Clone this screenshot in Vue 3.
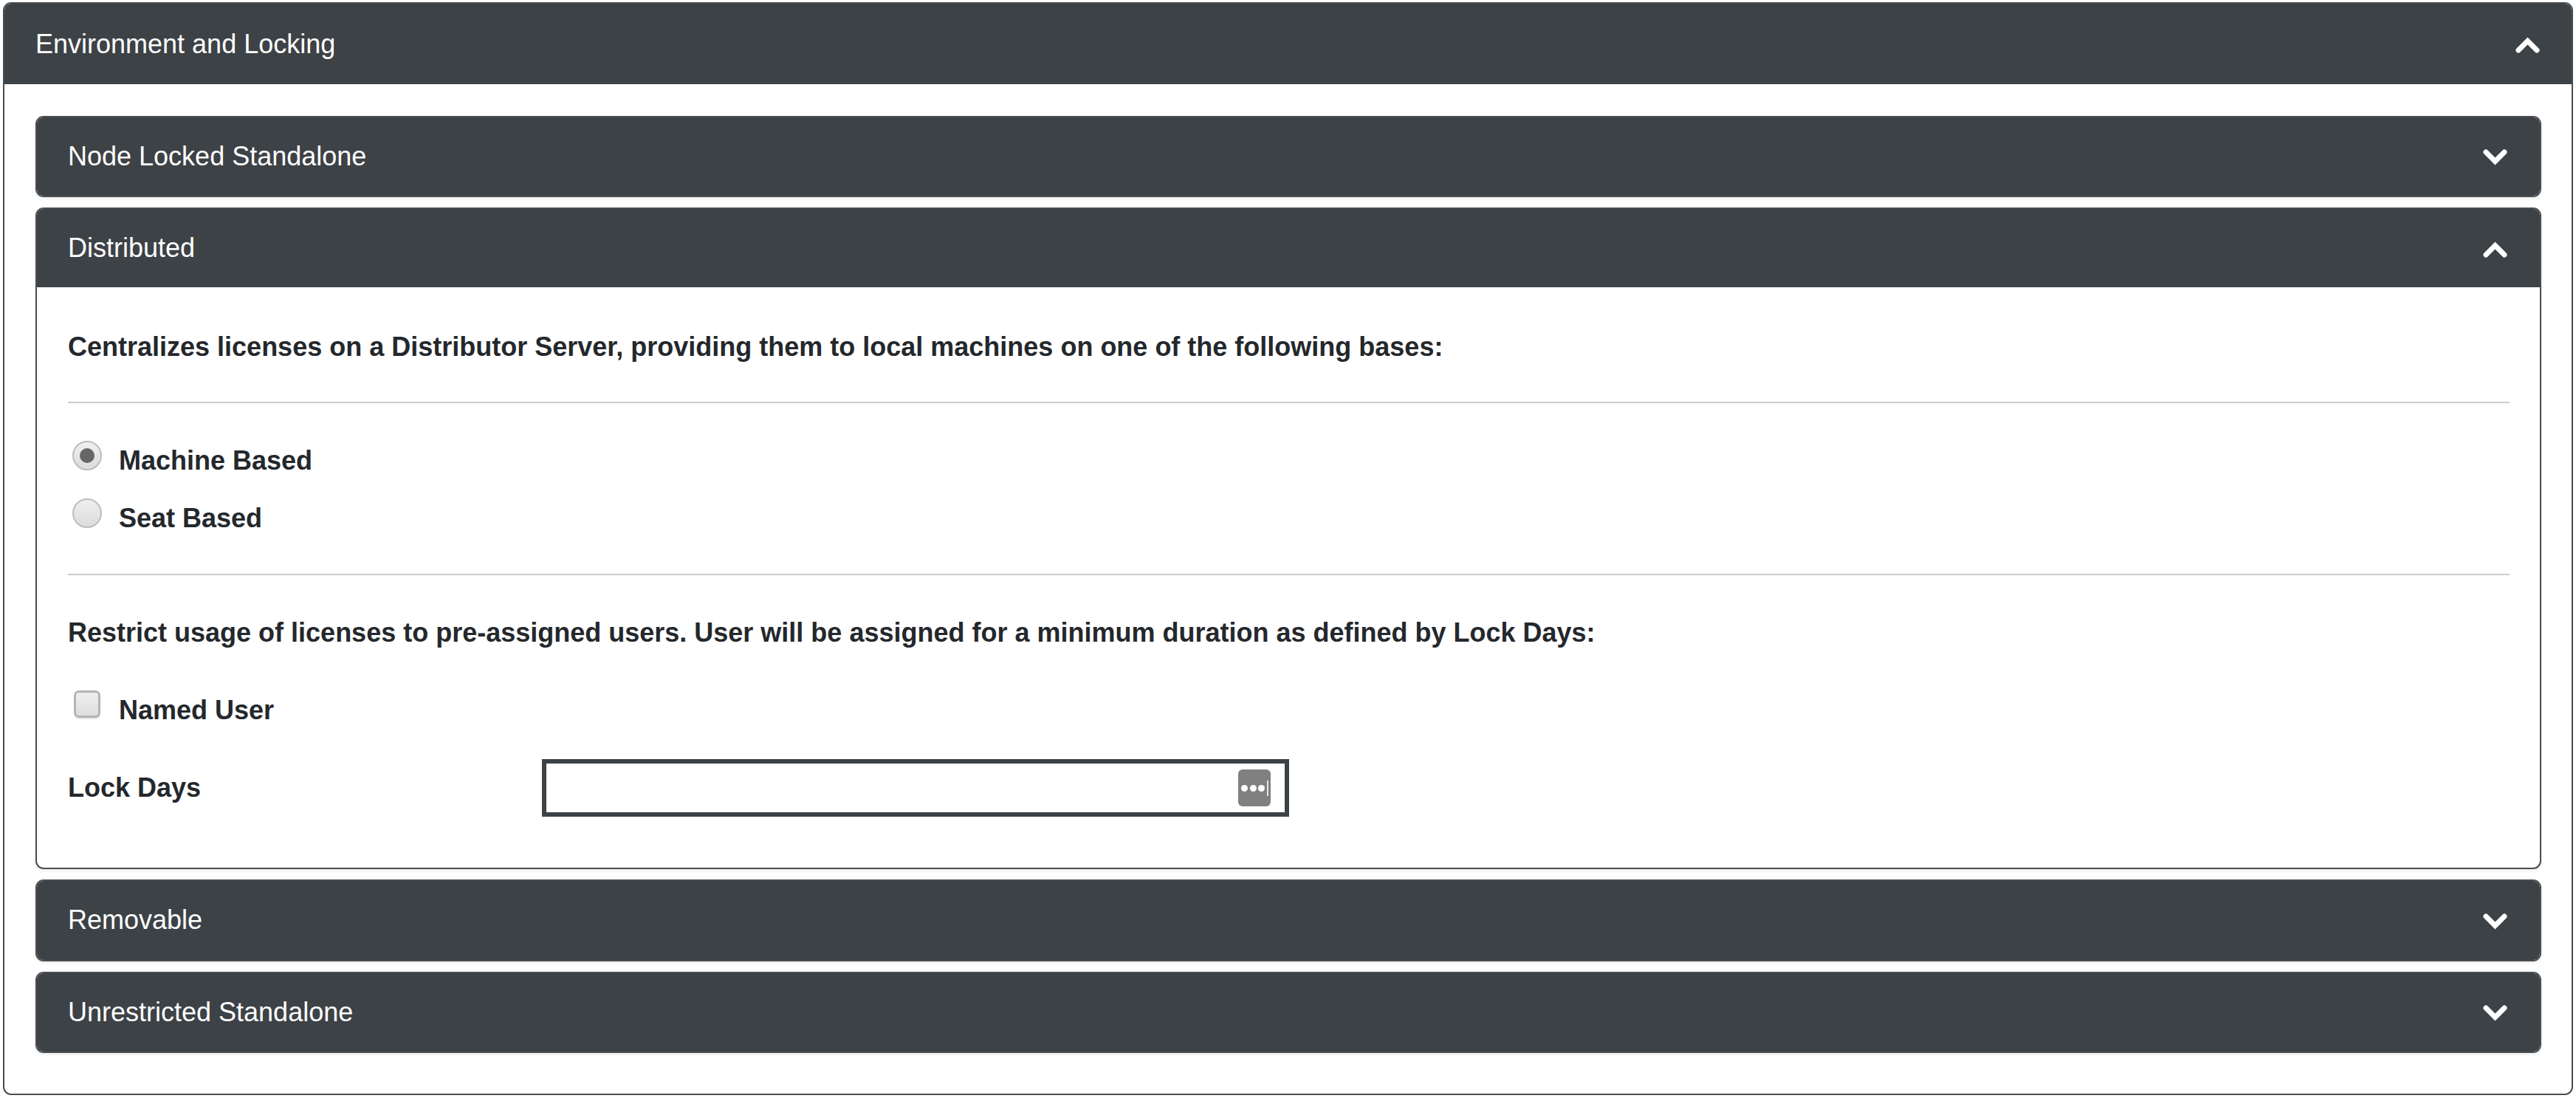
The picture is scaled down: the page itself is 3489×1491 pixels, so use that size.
<script setup>
import { ref } from 'vue'

const basis = ref('machine')
const namedUser = ref(false)
const lockDays = ref('')
</script>

<template>
  <div class="panel outer">
    <div class="panel-head outer-head">
      <span>Environment and Locking</span>
      <svg class="chev" viewBox="0 0 33 22"><path d="M4 18 L16.5 5.5 L29 18" /></svg>
    </div>
    <div class="outer-body">
      <div class="panel">
        <div class="panel-head">
          <span>Node Locked Standalone</span>
          <svg class="chev" viewBox="0 0 33 22"><path d="M4 4 L16.5 16.5 L29 4" /></svg>
        </div>
      </div>

      <div class="panel">
        <div class="panel-head open">
          <span>Distributed</span>
          <svg class="chev" viewBox="0 0 33 22"><path d="M4 18 L16.5 5.5 L29 18" /></svg>
        </div>
        <div class="panel-body">
          <p class="lead">Centralizes licenses on a Distributor Server, providing them to local machines on one of the following bases:</p>
          <hr class="rule-a" />
          <label class="opt first">
            <span class="radio" :class="{ on: basis === 'machine' }" @click="basis = 'machine'"></span>
            Machine Based
          </label>
          <label class="opt second">
            <span class="radio" :class="{ on: basis === 'seat' }" @click="basis = 'seat'"></span>
            Seat Based
          </label>
          <hr class="rule-b" />
          <p class="lead">Restrict usage of licenses to pre-assigned users. User will be assigned for a minimum duration as defined by Lock Days:</p>
          <label class="opt named">
            <span class="check" @click="namedUser = !namedUser"></span>
            Named User
          </label>
          <div class="lock-row">
            <span class="lock-label">Lock Days</span>
            <div class="lock-input">
              <input v-model="lockDays" type="text" />
              <span class="dots">
                <i></i><i></i><i></i>
                <b></b>
              </span>
            </div>
          </div>
        </div>
      </div>

      <div class="panel">
        <div class="panel-head">
          <span>Removable</span>
          <svg class="chev" viewBox="0 0 33 22"><path d="M4 4 L16.5 16.5 L29 4" /></svg>
        </div>
      </div>

      <div class="panel">
        <div class="panel-head">
          <span>Unrestricted Standalone</span>
          <svg class="chev" viewBox="0 0 33 22"><path d="M4 4 L16.5 16.5 L29 4" /></svg>
        </div>
      </div>
    </div>
  </div>
</template>

<style scoped>
.panel {
  border: 2px solid #4a4e52;
  border-radius: 11px;
  background: #fff;
  overflow: hidden;
  box-shadow: 0 2px 5px rgba(0, 0, 0, 0.08);
  font-family: "Liberation Sans", Arial, sans-serif;
  color: #24282c;
}

.outer {
  margin: 3px 4px 0;
  height: 1480px;
  box-sizing: border-box;
  box-shadow: none;
}

.panel-head {
  display: flex;
  align-items: center;
  justify-content: space-between;
  box-sizing: border-box;
  height: 106.5px;
  padding: 0 44px 0 42px;
  background: #3d4246;
  color: #fff;
  font-size: 36px;
}

.panel-head.open {
  height: 106px;
}

.outer-head {
  height: 109px;
  padding-left: 42px;
  padding-right: 43px;
}

.chev {
  width: 33px;
  height: 22px;
  flex: none;
  margin-top: 3px;
}

.chev path {
  fill: none;
  stroke: #fff;
  stroke-width: 7px;
  stroke-linejoin: miter;
  stroke-linecap: round;
}

.outer-body {
  display: flex;
  flex-direction: column;
  gap: 14px;
  padding: 42.5px 41px 0 42px;
}

.panel-body {
  padding: 54px 41px 69px 42px;
  font-size: 36px;
  font-weight: bold;
  line-height: 54px;
}

.lead {
  margin: 0;
}

hr {
  border: 0;
  border-top: 2px solid #cccccc;
}

.rule-a {
  margin: 47px 0 51px;
}

.rule-b {
  margin: 48px 0 51px;
}

.opt {
  display: flex;
  align-items: flex-start;
  height: 54px;
}

.opt.second {
  margin-top: 24px;
}

.opt.named {
  margin-top: 51px;
}

.radio {
  position: relative;
  box-sizing: border-box;
  flex: none;
  width: 40px;
  height: 40px;
  margin: 0 23px 0 6px;
  border: 2px solid #bdbdbd;
  border-radius: 50%;
  background: linear-gradient(#efefef, #dcdcdc);
}

.radio.on::after {
  content: "";
  position: absolute;
  left: 8px;
  top: 8px;
  width: 20px;
  height: 20px;
  border-radius: 50%;
  background: #666;
}

.check {
  box-sizing: border-box;
  flex: none;
  width: 36px;
  height: 37px;
  margin: 0 25px 0 8px;
  border: 3px solid #b4b4b4;
  border-radius: 7px;
  background: linear-gradient(#eeeeee, #dedede);
  box-shadow: 0 2px 0 #e6e6e6;
}

.lock-row {
  display: flex;
  align-items: center;
  margin-top: 39px;
  height: 78px;
}

.lock-label {
  width: 642px;
  flex: none;
}

.lock-input {
  display: flex;
  align-items: center;
  box-sizing: border-box;
  width: 1012px;
  height: 78px;
  padding-right: 19px;
  border: 6px solid #3d4246;
  background: #fff;
}

.lock-input input {
  flex: 1;
  min-width: 0;
  border: 0;
  outline: 0;
  font-size: 36px;
  background: transparent;
}

.dots {
  display: flex;
  align-items: center;
  gap: 2.5px;
  box-sizing: border-box;
  flex: none;
  width: 44px;
  height: 50px;
  padding-left: 4px;
  border-radius: 6px;
  background: #808080;
}

.dots i {
  width: 9px;
  height: 9px;
  border-radius: 50%;
  background: #fff;
}

.dots b {
  width: 2px;
  height: 21px;
  background: #e4e4e4;
}
</style>
